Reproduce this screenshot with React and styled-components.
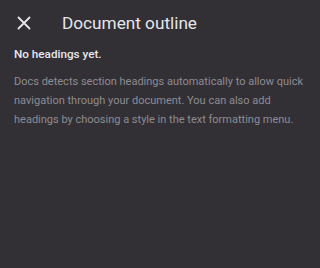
import React from 'react';
import styled, { createGlobalStyle } from 'styled-components';

const Global = createGlobalStyle`
  html, body {
    margin: 0;
    padding: 0;
    background: #323035;
  }
  body {
    font-family: Roboto, "Noto Sans", sans-serif;
    -webkit-font-smoothing: antialiased;
  }
`;

const Panel = styled.div`
  width: 320px;
  height: 268px;
  background: #323035;
  box-sizing: border-box;
  padding: 0 14px;
`;

const Header = styled.div`
  display: flex;
  align-items: center;
  height: 46px;
  gap: 28px;
`;

const CloseBtn = styled.button`
  width: 20px;
  height: 20px;
  padding: 0;
  border: 0;
  background: none;
  display: flex;
  align-items: center;
  justify-content: center;
  cursor: pointer;
`;

const Title = styled.h1`
  margin: 0;
  font-size: 17.2px;
  font-weight: 400;
  line-height: 22px;
  color: #e6e5e9;
`;

const Empty = styled.p`
  margin: 0;
  font-size: 11.7px;
  font-weight: 500;
  color: #e8e7eb;
  line-height: 16px;
`;

const Hint = styled.p`
  margin: 10px 0 0;
  font-size: 11px;
  line-height: 19px;
  color: #8d8c92;
`;

const App = () => (
  <>
    <Global />
    <Panel>
      <Header>
        <CloseBtn aria-label="Close">
          <svg width="14" height="14" viewBox="0 0 14 14">
            <path d="M1.5 1.5 L12.5 12.5 M12.5 1.5 L1.5 12.5" stroke="#e6e5e9" strokeWidth="1.8" strokeLinecap="round" />
          </svg>
        </CloseBtn>
        <Title>Document outline</Title>
      </Header>
      <Empty>No headings yet.</Empty>
      <Hint>
        Docs detects section headings automatically to allow quick navigation through your document. You can also add headings by choosing a style in the text formatting menu.
      </Hint>
    </Panel>
  </>
);

export default App;
